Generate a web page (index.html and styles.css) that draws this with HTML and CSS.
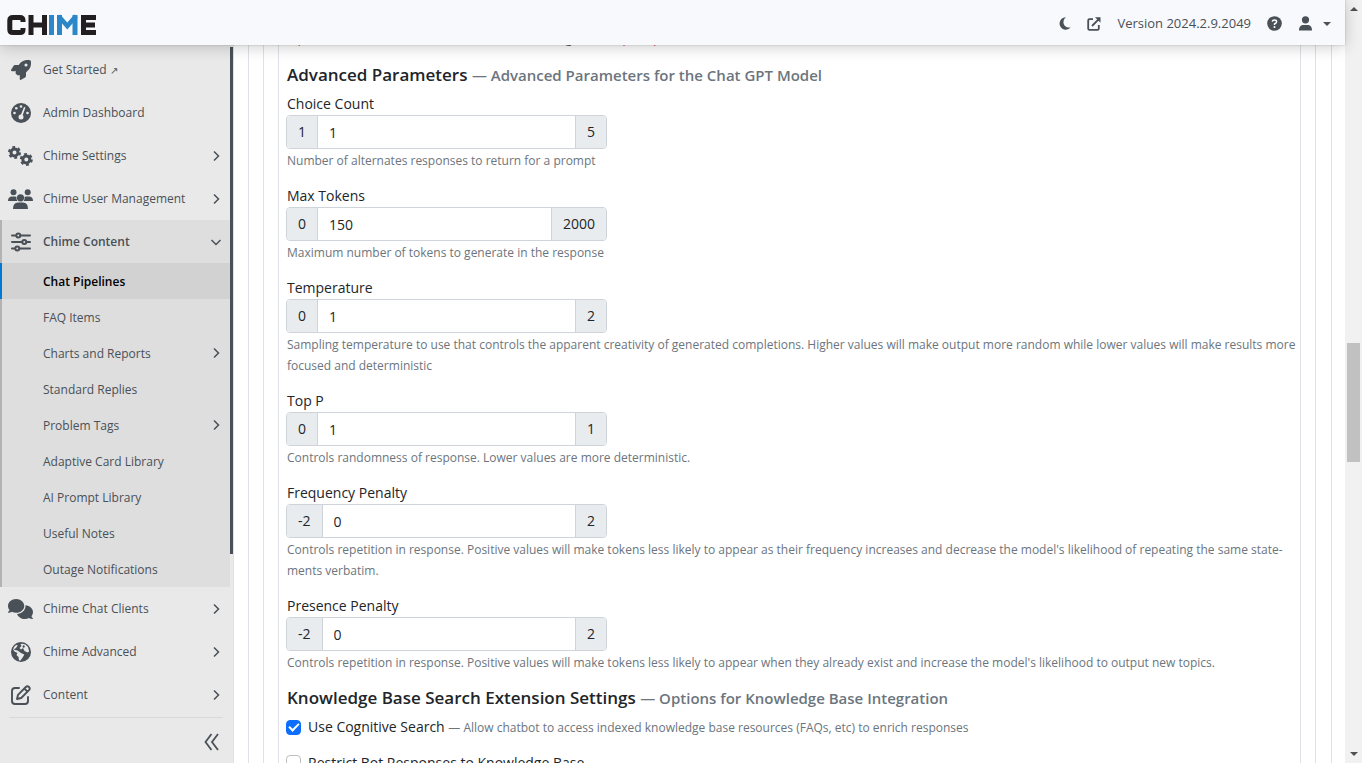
FILE: index.html
```html
<!DOCTYPE html>
<html lang="en">
<head>
<meta charset="utf-8">
<title>Chime</title>
<link rel="stylesheet" href="styles.css">
</head>
<body>
<svg class="defs" width="0" height="0"><symbol id="chev" viewBox="0 0 12 12"><path d="M4 1.500L8.500 6L4 10.500" fill="none" stroke="#495057" stroke-width="1.500"/></symbol></svg>
<div class="app">
  <div class="window">
    <header class="topbar">
      <a class="brand" href="#" aria-label="Chime">
        <svg width="90" height="22" viewBox="0 0 90 22" fill="none" stroke-width="5">
          <g stroke="#231f20">
            <path d="M16 8V6.500Q16 3.500 13 3.500H6Q2.800 3.500 2.800 6.500V15.500Q2.800 18.500 6 18.500H13Q16 18.500 16 15.500V14"/>
            <path d="M24 1V21M37.500 1V21M24 11H37.500"/>
            <path d="M89 3.500H76.500V18.500H89M76.500 11H88"/>
          </g>
          <g stroke="#2b87c8">
            <path d="M44.500 1V21M52.500 21V1M68 21V1"/>
            <path d="M51.500 2L60.300 12L69 2" stroke-width="4.500"/>
          </g>
        </svg>
      </a>
      <div class="tools">
        <button class="tool" aria-label="Dark mode"><svg width="12" height="13" viewBox="0 0 12 13"><path fill="#495057" d="M7 .3A6.200 6.200 0 1 0 11.500 10.500C7 11 4 8 4.500 4.500C4.700 2.700 5.700 1.200 7 .3Z"/></svg></button>
        <button class="tool" aria-label="Open in new window"><svg width="14" height="14" viewBox="0 0 14 14" fill="none" stroke="#495057" stroke-width="1.800"><path d="M6 2.200H2.500Q1.200 2.200 1.200 3.500V11.500Q1.200 12.800 2.500 12.800H10.500Q11.800 12.800 11.800 11.500V8M5 9L11.800 2.200"/><path fill="#495057" stroke="none" d="M8 .3H13.500V5.800L8 .3Z"/></svg></button>
        <span class="version">Version 2024.2.9.2049</span>
        <button class="tool help" aria-label="Help"><svg width="15" height="15" viewBox="0 0 15 15"><circle cx="7.500" cy="7.500" r="7.300" fill="#495057"/><path d="M5.300 5.600Q5.500 4 7.500 4Q9.600 4 9.600 5.700Q9.600 6.800 7.500 8V9" fill="none" stroke="#fff" stroke-width="1.500"/><circle cx="7.500" cy="10.900" r="1" fill="#fff"/></svg></button>
        <button class="tool user" aria-label="Account"><svg width="13" height="15" viewBox="0 0 13 15" fill="#495057"><circle cx="6.500" cy="3.800" r="3.600"/><path d="M0 14.500C0 10.500 2 9 4.500 9H8.500C11 9 13 10.500 13 14.500Z"/></svg><svg width="8" height="4" viewBox="0 0 8 4"><path fill="#495057" d="M0 0H8L4 4Z"/></svg></button>
      </div>
    </header>
    <div class="body">
      <nav class="sidebar">
        <div class="nav-list">
          <a class="item" href="#"><svg class="icon" viewBox="0 0 512 512"><path d="M156.600 384.900L125.700 354c-8.500-8.500-11.500-20.800-7.700-32.200c3-8.900 7-20.500 11.800-33.800L24 288c-8.600 0-16.600-4.600-20.900-12.100s-4.200-16.700 .2-24.100l52.500-88.500c13-21.900 36.500-35.300 61.900-35.300l82.300 0c2.400-4 4.800-7.700 7.200-11.300C289.100-4.100 411.100-8.100 483.900 5.300c11.600 2.100 20.600 11.200 22.800 22.800c13.400 72.900 9.300 194.800-111.400 276.700c-3.500 2.400-7.300 4.800-11.300 7.200v82.300c0 25.400-13.400 49-35.300 61.900l-88.500 52.500c-7.400 4.400-16.600 4.500-24.100 .2s-12.100-12.200-12.100-20.900V380.800c-14.100 4.900-26.400 8.900-35.700 11.900c-11.200 3.600-23.400 .5-31.800-7.800zM384 168a40 40 0 1 0 0-80 40 40 0 1 0 0 80z"/></svg><span>Get Started <small>↗</small></span></a>
          <a class="item" href="#"><svg class="icon" viewBox="0 0 20 20"><circle cx="10" cy="10" r="10"/><g fill="#e9e9e9"><circle cx="10" cy="3.500" r="1.300"/><circle cx="5.300" cy="5.300" r="1.300"/><circle cx="3.500" cy="10" r="1.300"/><circle cx="16.500" cy="10" r="1.300"/><circle cx="10" cy="14" r="2.500"/><path d="M13 4L14.500 4.600L11 14H9Z"/></g></svg><span>Admin Dashboard</span></a>
          <a class="item" href="#"><svg class="icon wide" viewBox="0 0 25 20" fill="none" stroke="#495057"><circle cx="6.500" cy="6.500" r="3.500" stroke-width="3"/><circle cx="6.500" cy="6.500" r="5.400" stroke-width="2.200" stroke-dasharray="2.800 2.850"/><circle cx="18.300" cy="13.500" r="3.500" stroke-width="3"/><circle cx="18.300" cy="13.500" r="5.400" stroke-width="2.200" stroke-dasharray="2.800 2.850"/></svg><span>Chime Settings</span><svg class="chev"><use href="#chev"/></svg></a>
          <a class="item" href="#"><svg class="icon wide" viewBox="0 0 25 20"><circle cx="5.500" cy="3.300" r="3"/><circle cx="19.700" cy="3.300" r="3"/><path d="M0 12Q0 7.500 4 7.500H7Q8.200 7.500 8.500 8Q8 10.500 9.300 12ZM25 12Q25 7.500 21 7.500H18Q16.800 7.500 16.500 8Q17 10.500 15.700 12Z"/><circle cx="12.500" cy="8.800" r="3.600"/><path d="M5 20Q5 13.500 10 13.500H15Q20 13.500 20 20Z"/></svg><span>Chime User Management</span><svg class="chev"><use href="#chev"/></svg></a>
          <div class="group">
            <a class="item parent" href="#"><svg class="icon" viewBox="0 0 20 20" fill="none" stroke="#495057" stroke-width="2"><path stroke-linecap="round" d="M1 3.500H5M9.500 3.500H19M1 10H11M15.500 10H19M1 16.500H4M8.500 16.500H19"/><circle cx="7.300" cy="3.500" r="2"/><circle cx="13.300" cy="10" r="2"/><circle cx="6.300" cy="16.500" r="2"/></svg><span>Chime Content</span><svg class="chev down"><use href="#chev"/></svg></a>
            <a class="sub active" href="#"><span>Chat Pipelines</span></a>
            <a class="sub" href="#"><span>FAQ Items</span></a>
            <a class="sub" href="#"><span>Charts and Reports</span><svg class="chev"><use href="#chev"/></svg></a>
            <a class="sub" href="#"><span>Standard Replies</span></a>
            <a class="sub" href="#"><span>Problem Tags</span><svg class="chev"><use href="#chev"/></svg></a>
            <a class="sub" href="#"><span>Adaptive Card Library</span></a>
            <a class="sub" href="#"><span>AI Prompt Library</span></a>
            <a class="sub" href="#"><span>Useful Notes</span></a>
            <a class="sub" href="#"><span>Outage Notifications</span></a>
          </div>
          <a class="item" href="#"><svg class="icon wide" viewBox="0 0 640 512"><path d="M208 352c114.900 0 208-78.800 208-176S322.900 0 208 0S0 78.800 0 176c0 38.600 14.700 74.300 39.600 103.400c-3.500 9.400-8.700 17.700-14.200 24.700c-4.800 6.200-9.700 11-13.300 14.300C5.500 324 2 327 1 331c-3 12 5 21 15 21c21.800 0 43.900-5.600 62.300-12.500c9.200-3.500 17.800-7.400 25.200-11.400C134.100 343.300 169.800 352 208 352zM448 176c0 112.300-99.100 196.900-216.500 207C255.800 457.400 336.400 512 432 512c38.200 0 73.900-8.700 104.700-23.900c7.500 4 16 7.900 25.200 11.400c18.300 6.900 40.300 12.500 62.100 12.500c12 0 20-11 14-22c-8-8-17-15-24-26c-5.500-7-10.700-15.300-14.200-24.700c24.900-29 39.600-64.700 39.600-103.400c0-92.800-84.900-168.900-192.600-175.500c.4 5.100 .6 10.300 .6 15.500z"/></svg><span>Chime Chat Clients</span><svg class="chev"><use href="#chev"/></svg></a>
          <a class="item" href="#"><svg class="icon" viewBox="0 0 20 20"><circle cx="10" cy="10" r="10"/><g fill="#e9e9e9"><path d="M2 7.500L6.500 8.500L10 11L13.300 12.500L12 15L9.500 18.400H8L7.500 15L5.500 13L6.500 11L3.500 9.500Z"/><path d="M9.500 2Q14 1 17 5L18.200 9.500L16.500 10.500L13.500 9L12 6L14 5L13 3L11.500 4L12 6L10 7.500L8.500 6L10.500 4Z"/><path d="M2 8Q2.500 4.500 5 3L6.800 3.200L5 6Z"/></g></svg><span>Chime Advanced</span><svg class="chev"><use href="#chev"/></svg></a>
          <a class="item" href="#"><svg class="icon" viewBox="0 0 20 20" fill="none" stroke="#495057" stroke-width="1.900" stroke-linejoin="round" stroke-linecap="round"><path d="M8 3H4Q1 3 1 6V16Q1 19 4 19H14Q17 19 17 16V12"/><path d="M6 14L7 9.800L14.800 2Q16.300 .5 18 2Q19.500 3.700 18 5.200L10.200 13ZM13.300 3.500L16.500 6.700"/></svg><span>Content</span><svg class="chev"><use href="#chev"/></svg></a>
        </div>
        <div class="collapse"><button class="fold" aria-label="Collapse menu"><svg width="15" height="18" viewBox="0 0 15 18" fill="none" stroke="#495057" stroke-width="1.800"><path d="M7.500 1L1.500 9L7.500 17M14 1L8 9L14 17"/></svg></button></div>
        <div class="side-scroll"></div>
      </nav>
      <main class="main">
        <div class="pane"><div class="pane"><div class="pane form">
          <p class="cut"><b>Input</b> values are inserted at the start of the message for the <b>prompt</b></p>
          <h4>Advanced Parameters <small>— Advanced Parameters for the Chat GPT Model</small></h4>
          <section class="field"><label for="cc">Choice Count</label><div class="group-input"><span>1</span><input id="cc" value="1"><span>5</span></div><p>Number of alternates responses to return for a prompt</p></section>
          <section class="field"><label for="mt">Max Tokens</label><div class="group-input"><span>0</span><input id="mt" value="150"><span>2000</span></div><p>Maximum number of tokens to generate in the response</p></section>
          <section class="field"><label for="te">Temperature</label><div class="group-input"><span>0</span><input id="te" value="1"><span>2</span></div><p>Sampling temperature to use that controls the apparent creativity of generated completions. Higher values will make output more random while lower values will make results more focused and deterministic</p></section>
          <section class="field"><label for="tp">Top P</label><div class="group-input"><span>0</span><input id="tp" value="1"><span>1</span></div><p>Controls randomness of response. Lower values are more deterministic.</p></section>
          <section class="field"><label for="fp">Frequency Penalty</label><div class="group-input"><span>-2</span><input id="fp" value="0"><span>2</span></div><p>Controls repetition in response. Positive values will make tokens less likely to appear as their frequency increases and decrease the model's likelihood of repeating the same state&shy;ments verbatim.</p></section>
          <section class="field"><label for="pp">Presence Penalty</label><div class="group-input"><span>-2</span><input id="pp" value="0"><span>2</span></div><p>Controls repetition in response. Positive values will make tokens less likely to appear when they already exist and increase the model's likelihood to output new topics.</p></section>
          <h4>Knowledge Base Search Extension Settings <small>— Options for Knowledge Base Integration</small></h4>
          <div class="check"><input type="checkbox" id="cs" checked><label for="cs">Use Cognitive Search <small>— Allow chatbot to access indexed knowledge base resources (FAQs, etc) to enrich responses</small></label></div>
          <div class="check"><input type="checkbox" id="rb"><label for="rb">Restrict Bot Responses to Knowledge Base</label></div>
        </div></div></div>
      </main>
    </div>
  </div>
  <div class="scrollbar"><i class="arrow up"></i><i class="before"></i><i class="thumb"></i><i class="after"></i><i class="arrow dn"></i></div>
</div>
</body>
</html>
```
FILE: styles.css
```css
* { box-sizing: border-box; }
body { margin: 0; font: 14px/21px "Open Sans", "Noto Sans", sans-serif; color: #212529; background: #fff; }
a { color: inherit; text-decoration: none; }
button { border: 0; padding: 0; background: none; display: flex; align-items: center; }
.defs { display: none; }
.app { display: flex; height: 100vh; overflow: hidden; }
.window { flex: 1; min-width: 0; display: flex; flex-direction: column; }

.topbar { flex: none; height: 45px; display: flex; align-items: center; justify-content: space-between; padding: 2px 14px 0 7px; background: #f8f9fc; box-shadow: 0 2px 16px rgba(0,0,0,.2), 0 0 2px rgba(0,0,0,.2); position: relative; z-index: 2; }
.brand { padding-top: 2px; }
.brand svg { display: block; }
.tools { display: flex; align-items: center; gap: 16px; color: #495057; }
.version { font-size: 13px; }
.help { margin-right: 1px; }
.user { gap: 11px; }

.body { flex: 1; min-height: 0; display: flex; }
.sidebar { position: relative; width: 234px; flex: none; background: #e9e9e9; border-right: 1px solid #dee2e6; color: #495057; font-size: 12px; padding-top: 3px; display: flex; flex-direction: column; }
.item, .sub { display: flex; align-items: center; padding: 0 8px 0 43px; height: 43px; margin-right: 3px; }
.item span, .sub span { flex: 1; white-space: nowrap; }
.item small { font-size: 10px; }
.item .icon { width: 20px; height: 20px; margin-left: -32px; margin-right: 12px; flex: none; fill: #495057; }
.item .icon.wide { width: 25px; margin-left: -35px; margin-right: 10px; }
.item .icon[fill="none"] { fill: none; }
.group { background: #dedede; border-left: 2px solid #b3b3b3; margin-right: 3px; }
.group .item, .group .sub { margin-right: 0; padding-left: 41px; }
.group .parent { font-weight: 600; }
.group .sub { height: 36px; }
.group .active { background: #d2d2d2; color: #000; font-weight: 600; margin-left: -2px; border-left: 2px solid #0078d4; }
.chev { width: 12px; height: 12px; flex: none; }
.chev.down { transform: rotate(90deg); }
.collapse { margin: 1px 10px 0 9px; border-top: 1px solid #d9d9d9; padding: 15px 4px; display: flex; justify-content: flex-end; }
.side-scroll { position: absolute; right: 0; top: 2px; width: 3px; height: 507px; background: #495057; }

.main { flex: 1; min-width: 0; overflow: hidden; padding: 0 13px 0 14px; }
.pane { border: solid #dee2e6; border-width: 0 1px; padding: 0 15px 0 14px; }
.pane .pane { padding: 0 14px; }
.pane .pane.form { padding: 0 2px 0 8px; }
h4 { margin: 0 0 8px; font-size: 17px; line-height: 20px; font-weight: 600; }
h4 small { font-size: 15px; color: #6c757d; }
.cut { margin: -17px 0 16px; font-size: 12px; color: #495057; }
.cut b { font-weight: 400; color: #dc3545; }
.field { margin-bottom: 14px; }
.field + h4 { margin-top: 15px; }
.field label { display: block; line-height: 22px; }
.field p { margin: 0; font-size: 12px; color: #6c757d; padding-top: 1px; }
.group-input { display: flex; width: 321px; height: 34px; margin-left: -1px; border: 1px solid #ced4da; border-radius: 4px; overflow: hidden; }
.group-input span { background: #e9ecef; padding: 0 11px; line-height: 32px; }
.group-input input { flex: 1; min-width: 0; border: solid #ced4da; border-width: 0 1px; padding: 0 11px; font: inherit; color: inherit; }
.check { display: flex; align-items: center; gap: 7px; margin: 0 0 14px -1px; }
.check small { font-size: 12px; color: #6c757d; }
.check input { appearance: none; width: 15px; height: 15px; margin: 0; border: 1px solid #bfbfbf; border-radius: 4px; }
.check input:checked { border-color: #0d6efd; background: #0d6efd; display: grid; place-items: center; }
.check input:checked::before { content: ""; width: 8px; height: 4px; border: solid #fff; border-width: 0 0 2px 2px; transform: rotate(-45deg); margin-bottom: 2px; }

.scrollbar { width: 17px; flex: none; background: #f1f1f1; display: flex; flex-direction: column; align-items: center; padding: 7px 0; }
.arrow { border: 4px solid transparent; height: 0; }
.up { border-top: 0; border-bottom-color: #505050; }
.dn { border-bottom: 0; border-top-color: #505050; }
.before { flex: 332; }
.after { flex: 290; }
.thumb { width: 13px; height: 119px; background: #c1c1c1; }
```
